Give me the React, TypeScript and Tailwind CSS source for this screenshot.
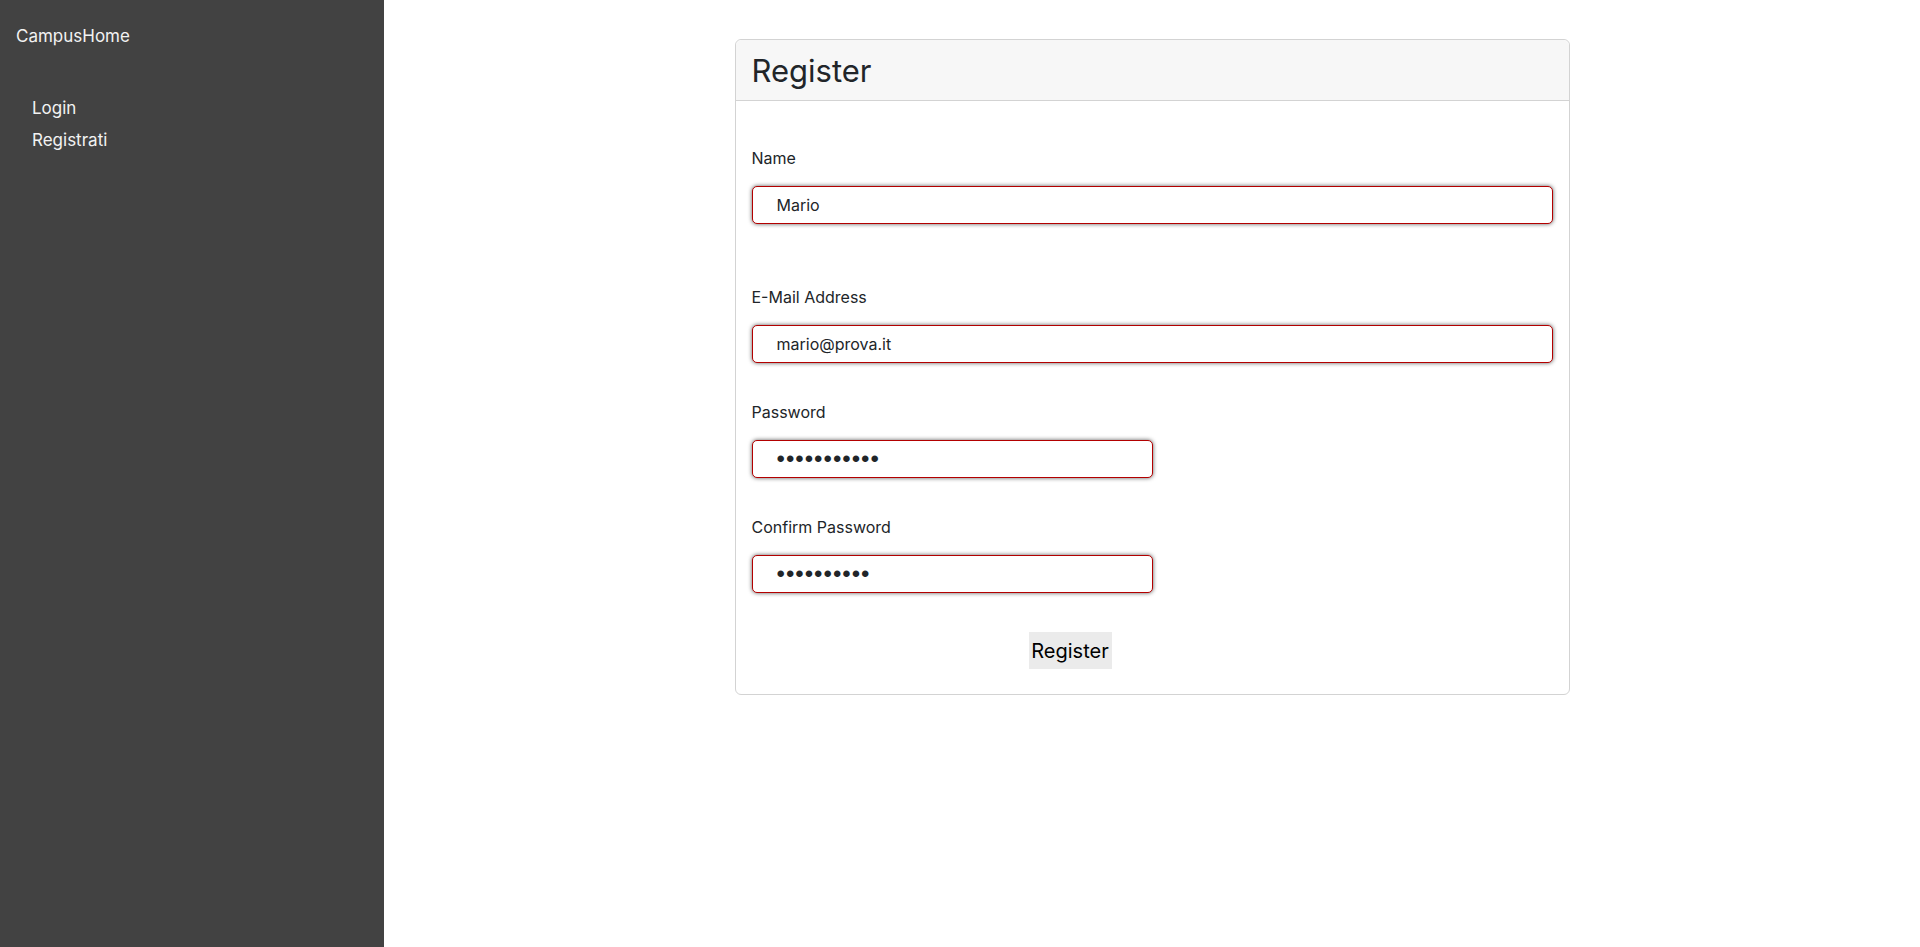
import React from "react";

const font = { fontFamily: "Inter, 'Noto Sans', sans-serif" };
const pwFont = { fontFamily: "'Liberation Sans', Arial, sans-serif" };

function Field({ label, value, type = "text", half = false, mt }: { label: string; value: string; type?: string; half?: boolean; mt: string }) {
  return (
    <div className={mt}>
      <label className="block text-[16px] leading-[24px] text-[#212529]">{label}</label>
      <input
        type={type}
        defaultValue={value}
        readOnly
        className={`mt-[16px] block h-[38px] ${half ? "w-[401px]" : "w-full"} rounded-[5px] border-[1.5px] border-[#b30000] bg-white pl-[24px] ${type === "password" ? "text-[24px] tracking-[1px]" : "text-[16px]"} text-[#212529] shadow-[0_0_4px_rgba(0,0,0,0.65)] outline-none`}
        style={type === "password" ? pwFont : font}
      />
    </div>
  );
}

export default function App() {
  return (
    <div className="flex min-h-screen bg-white" style={font}>
      <aside className="w-[384px] shrink-0 bg-[#424242] h-[947px] text-[#f2f2f2]">
        <div className="px-4 pt-6 text-[17px] leading-[24px]">CampusHome</div>
        <nav className="mt-[44px] pl-8 text-[17px] leading-[32px]">
          <div>Login</div>
          <div>Registrati</div>
        </nav>
      </aside>
      <main className="flex-1">
        <div className="mx-auto mt-[39px] w-[835px] rounded-[6px] border border-[#d3d3d3]">
          <div className="rounded-t-[6px] border-b border-[#d3d3d3] bg-[#f7f7f7] px-4 pt-[12px] pb-[10px] text-[31px] leading-[38px] text-[#212529]">
            Register
          </div>
          <div className="px-4 pt-[45px] pb-[25px]">
            <Field label="Name" value="Mario" mt="" />
            <Field label="E-Mail Address" value="mario@prova.it" type="email" mt="mt-[61px]" />
            <Field label="Password" value="aaaaaaaaaaa" type="password" half mt="mt-[37px]" />
            <Field label="Confirm Password" value="aaaaaaaaaa" type="password" half mt="mt-[37px]" />
            <div className="mt-[39px] flex">
              <button className="ml-[277px] h-[37px] w-[83px] bg-[#ebebeb] text-[20px] text-black">Register</button>
            </div>
          </div>
        </div>
      </main>
    </div>
  );
}
